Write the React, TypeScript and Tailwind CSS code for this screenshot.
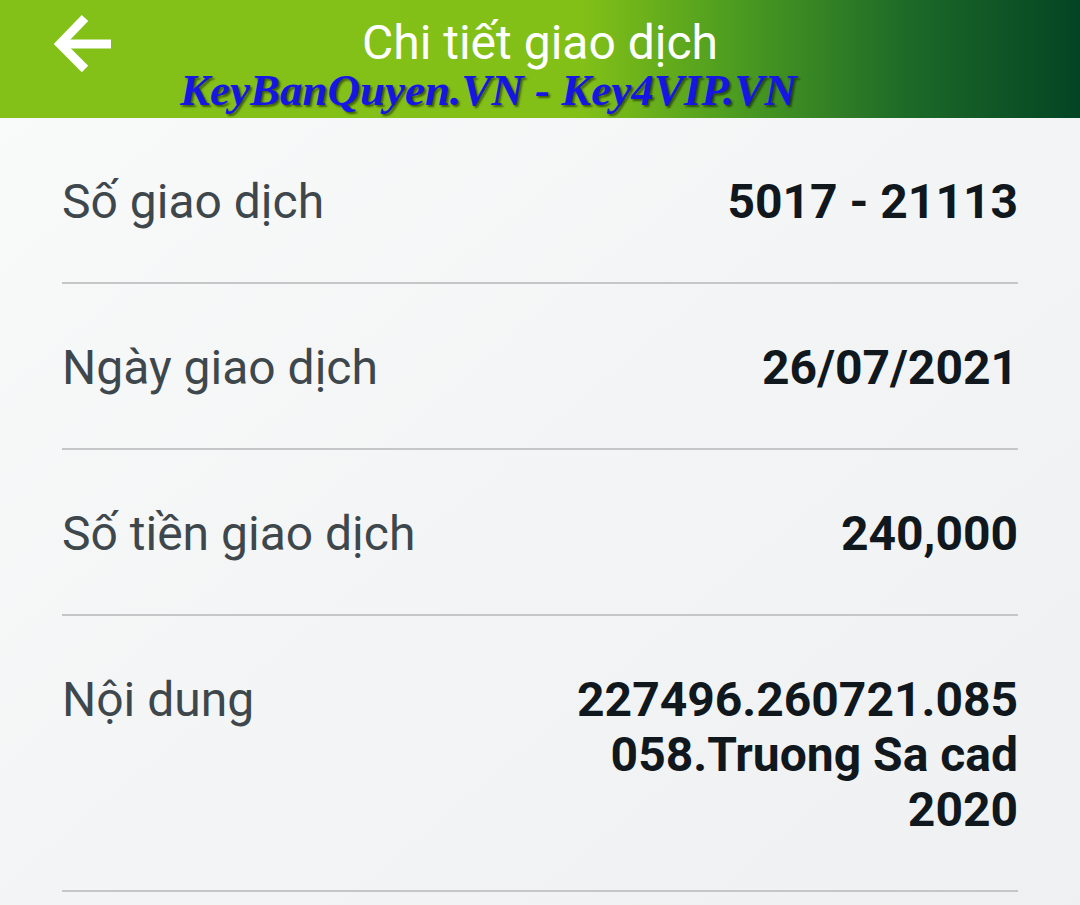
import React from "react";

const rows = [
  { label: "Số giao dịch", value: "5017 - 21113" },
  { label: "Ngày giao dịch", value: "26/07/2021" },
  { label: "Số tiền giao dịch", value: "240,000" },
  { label: "Nội dung", value: "227496.260721.085058.Truong Sa cad 2020" },
];

export default function App() {
  return (
    <div
      className="w-[1080px] h-[905px] overflow-hidden bg-gradient-to-br from-[#f9fafa] to-[#eef0f1]"
      style={{ fontFamily: "Roboto, 'Noto Sans', sans-serif" }}
    >
      {/* Header */}
      <div className="relative h-[118px] bg-[linear-gradient(to_right,#84c118_0%,#82c018_54%,#4c9c20_68%,#1d6a28_84%,#034424_100%)]">
        <button className="absolute left-[54px] top-[14px] w-[57px] h-[60px]">
          <svg viewBox="0 0 57 60" className="w-[57px] h-[60px]" fill="none" stroke="white" strokeWidth="9">
            <path d="M57 30H8" />
            <path d="M31 4L6 30l25 25" strokeLinejoin="miter" />
          </svg>
        </button>
        <div className="pt-[14px] text-center text-white text-[48px] leading-[58px]">
          Chi tiết giao dịch
        </div>
        <div
          className="absolute left-[180px] top-[63px] text-[45px] leading-[54px] font-bold italic text-[#1616e4] [text-shadow:2px_2px_2px_rgba(0,0,0,0.5)]"
          style={{ fontFamily: "'Liberation Serif', 'Times New Roman', serif" }}
        >
          KeyBanQuyen.VN - Key4VIP.VN
        </div>
      </div>

      {/* Rows */}
      <div className="px-[62px]">
        {rows.map((r) => (
          <div
            key={r.label}
            className="flex justify-between pt-[56px] pb-[53px] border-b-2 border-[#c4c6c7]"
          >
            <div className="text-[48px] leading-[55px] text-[#3e474c]">
              {r.label}
            </div>
            <div className="w-[455px] text-right text-[48px] leading-[55px] font-bold text-[#10181d] break-words">
              {r.value}
            </div>
          </div>
        ))}
      </div>
    </div>
  );
}
